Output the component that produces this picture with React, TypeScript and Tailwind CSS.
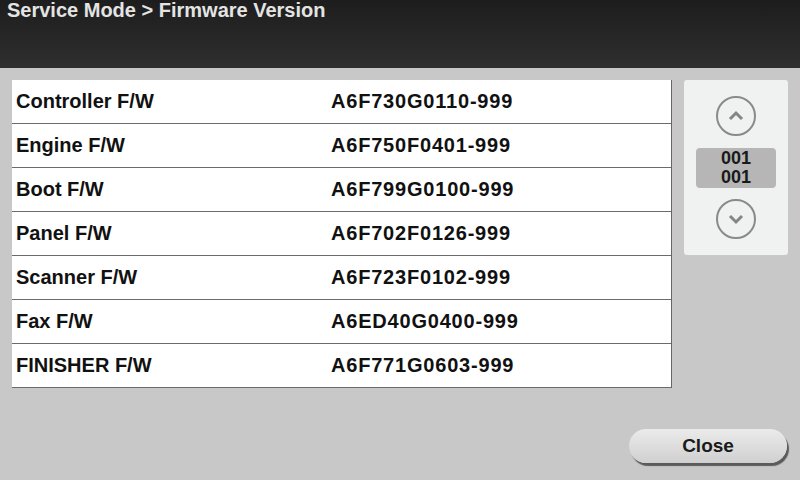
const rows = [
  { name: 'Controller F/W', version: 'A6F730G0110-999' },
  { name: 'Engine F/W', version: 'A6F750F0401-999' },
  { name: 'Boot F/W', version: 'A6F799G0100-999' },
  { name: 'Panel F/W', version: 'A6F702F0126-999' },
  { name: 'Scanner F/W', version: 'A6F723F0102-999' },
  { name: 'Fax F/W', version: 'A6ED40G0400-999' },
  { name: 'FINISHER F/W', version: 'A6F771G0603-999' },
]

function Chevron({ down = false }: { down?: boolean }) {
  return (
    <svg width="18" height="12" viewBox="0 0 18 12">
      <path
        d={down ? 'M3 3 L9 9 L15 3' : 'M3 9 L9 3 L15 9'}
        fill="none"
        stroke="#858585"
        strokeWidth="3"
      />
    </svg>
  )
}

function RoundButton({ down = false }: { down?: boolean }) {
  return (
    <button className="w-[40px] h-[40px] rounded-full border-2 border-[#8a8a8a] flex items-center justify-center">
      <Chevron down={down} />
    </button>
  )
}

export default function App() {
  return (
    <div
      className="w-[800px] h-[480px] bg-[#c8c8c8] flex flex-col overflow-hidden"
      style={{ fontFamily: '"Liberation Sans", Arial, sans-serif' }}
    >
      <div className="h-[68px] shrink-0 bg-gradient-to-b from-[#1d1d1d] to-[#2f2f2f] px-[7px]">
        <div className="text-[20px] leading-[20px] font-bold text-[#e4e4e4]">
          Service Mode &gt; Firmware Version
        </div>
      </div>

      <div className="flex pl-[12px] pt-[12px]">
        <div className="w-[660px] bg-white border-r border-[#666]">
          {rows.map((r) => (
            <div
              key={r.name}
              className="h-[44px] pb-[2px] flex items-center border-b border-[#6b6b6b] text-[20px] leading-[22px] font-bold text-[#111]"
            >
              <div className="w-[319px] pl-[4px]">{r.name}</div>
              <div className="tracking-[0.8px]">{r.version}</div>
            </div>
          ))}
        </div>

        <div className="ml-[12px] w-[104px] h-[175px] bg-[#f0f1f1] rounded-[3px] flex flex-col items-center pt-[16px]">
          <RoundButton />
          <div className="mt-[12px] w-[80px] h-[40px] bg-[#b5b6b5] rounded-[4px] flex flex-col items-center justify-center text-[18px] leading-[19px] font-bold text-[#1a1a1a]">
            <div>001</div>
            <div>001</div>
          </div>
          <div className="mt-[11px]">
            <RoundButton down />
          </div>
        </div>
      </div>

      <div className="mt-auto flex justify-end pr-[13px] pb-[17px]">
        <button className="w-[158px] h-[34px] rounded-full bg-gradient-to-b from-[#ebebeb] to-[#d0d0d0] shadow-[2px_3px_1px_#5a5a5a] text-[19px] font-bold text-[#1a1a1a]">
          Close
        </button>
      </div>
    </div>
  )
}
